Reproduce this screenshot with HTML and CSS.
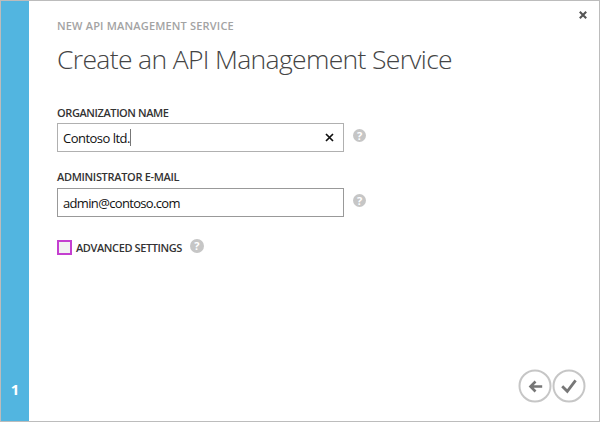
FILE: index.html
```html
<!DOCTYPE html>
<html lang="en">
<head>
<meta charset="utf-8">
<title>Create an API Management Service</title>
<link rel="stylesheet" href="styles.css">
</head>
<body>
<div class="dialog">
  <aside class="steps"><span class="step">1</span></aside>
  <main class="content">
    <p class="eyebrow">NEW API MANAGEMENT SERVICE</p>
    <h1 class="title">Create an API Management Service</h1>
    <div class="field">
      <label class="label label-org">ORGANIZATION NAME</label>
      <div class="row">
        <div class="input"><span class="value value-org">Contoso ltd.</span><span class="caret"></span>
          <svg class="clear" width="9" height="9" viewBox="0 0 9 9"><path d="M1 1l7 7M8 1L1 8" stroke="#111" stroke-width="1.7"/></svg>
        </div>
        <span class="help">?</span>
      </div>
    </div>
    <div class="field">
      <label class="label label-mail">ADMINISTRATOR E-MAIL</label>
      <div class="row row-mail">
        <div class="input input-mail"><span class="value value-mail">admin@contoso.com</span></div>
        <span class="help">?</span>
      </div>
    </div>
    <div class="advanced">
      <span class="checkbox"></span>
      <span class="label label-adv">ADVANCED SETTINGS</span>
      <span class="help help-adv">?</span>
    </div>
    <div class="actions">
      <svg width="34" height="34" viewBox="0 0 34 34" fill="none"><circle cx="17" cy="17" r="15.5" stroke="#c6c6c6" stroke-width="2"/><path d="M24.2 17.5H12M17.5 12.5l-5 5 5 5" stroke="#777" stroke-width="2.6"/></svg>
      <svg width="34" height="34" viewBox="0 0 34 34" fill="none"><circle cx="17" cy="17" r="15.5" stroke="#c6c6c6" stroke-width="2"/><path d="M10.2 17.2l5.1 5.1 8.3-11" stroke="#777" stroke-width="2.8"/></svg>
    </div>
  </main>
  <svg class="close" width="8" height="8" viewBox="0 0 8 8"><path d="M.8.8l6.4 6.4M7.2.8L.8 7.2" stroke="#555" stroke-width="2.1"/></svg>
</div>
</body>
</html>
```
FILE: styles.css
```css
* { box-sizing: border-box; }
body { margin: 0; font-family: "Open Sans", "Noto Sans", sans-serif; color: #333; }
.dialog {
  position: relative;
  display: flex;
  width: 600px;
  height: 422px;
  border: 1px solid #bcbcbc;
  background: #fff;
}
.steps {
  display: flex;
  flex-direction: column;
  justify-content: flex-end;
  align-items: center;
  width: 28px;
  padding-bottom: 22px;
  background: #52b5e0;
}
.step { color: #fff; font-size: 15px; line-height: 20px; font-weight: 700; }
.content { display: flex; flex-direction: column; flex: 1; padding: 17px 13px 18px 28px; }
.eyebrow {
  margin: 0;
  color: #a3a3a3;
  font-size: 11px;
  line-height: 16px;
  font-weight: 600;
  letter-spacing: .18px;
  white-space: nowrap;
}
.title {
  margin: 7px 0 0;
  color: #444;
  font-size: 26.5px;
  line-height: 36px;
  font-weight: 300;
  letter-spacing: -.66px;
  white-space: nowrap;
}
.field { margin-top: 17px; }
.title + .field { margin-top: 28px; }
.label { display: block; font-size: 11px; line-height: 16px; font-weight: 600; white-space: nowrap; }
.label-org { letter-spacing: -.4px; }
.label-mail { letter-spacing: -.32px; }
.label-adv { letter-spacing: -.4px; }
.row { display: flex; gap: 9px; margin-top: 2px; }
.row-mail { margin-top: 3px; }
.input {
  display: flex;
  align-items: center;
  width: 287px;
  height: 29px;
  padding: 0 9px 0 5px;
  border: 1px solid #b0b0b0;
}
.input-mail { border-color: #999; }
.value { color: #111; font-size: 13px; line-height: 18px; white-space: nowrap; }
.value-org { letter-spacing: -.52px; }
.value-mail { letter-spacing: -.66px; }
.caret { width: 1px; height: 17px; background: #777; }
.clear { margin-left: auto; }
.help {
  width: 13px;
  height: 13px;
  margin-top: 6px;
  border-radius: 50%;
  background: #c6c6c6;
  color: #fff;
  font-size: 11px;
  line-height: 13px;
  font-weight: 700;
  text-align: center;
}
.advanced { display: flex; align-items: center; margin-top: 23px; }
.checkbox { width: 15px; height: 15px; margin: -1px 4px 0 0; border: 2px solid #c43fd0; background: #f2f2f2; }
.help-adv { width: 14px; height: 14px; line-height: 14px; margin: -4px 0 0 8px; }
.actions { display: flex; margin-top: auto; justify-content: flex-end; }
.close { position: absolute; top: 10px; right: 12px; }
```
